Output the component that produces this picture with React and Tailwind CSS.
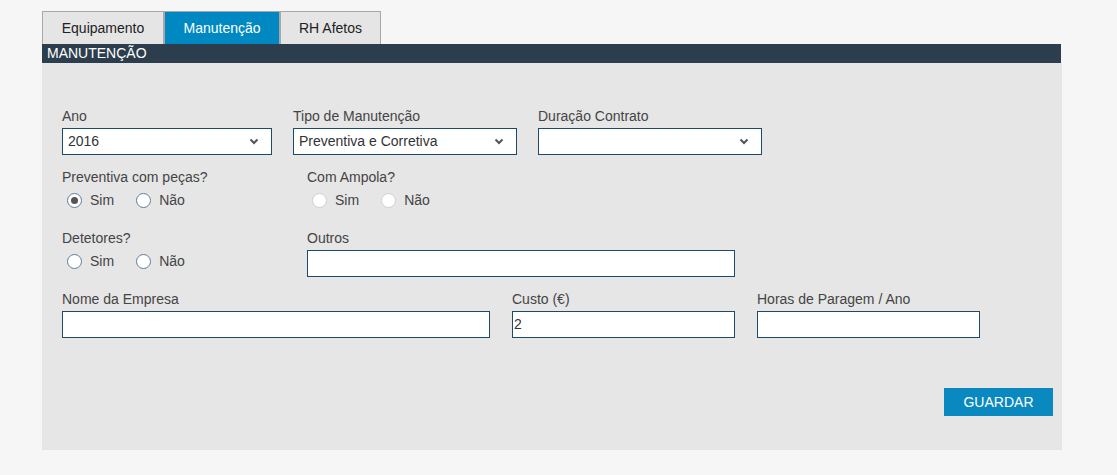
import React, { useState } from "react";

const font = { fontFamily: '"Liberation Sans", Arial, sans-serif' };

// Small chevron for the selects
const Chevron = () => (
  <svg width="10" height="7" viewBox="0 0 10 7" className="shrink-0">
    <polyline points="1.5,1.5 5,5 8.5,1.5" fill="none" stroke="#555" strokeWidth="2" />
  </svg>
);

const SelectBox = ({ label, value, width }) => (
  <div className={width}>
    <div className="text-[14px] leading-4 text-[#444] mb-1">{label}</div>
    <div className="h-[27px] bg-white border border-[#1d4a6b] flex items-center justify-between pl-[5px] pr-[12px] text-[14px] text-[#333]">
      <span>{value}</span>
      <Chevron />
    </div>
  </div>
);

const TextBox = ({ label, value, width }) => (
  <div className={width}>
    <div className="text-[14px] leading-4 text-[#444] mb-1">{label}</div>
    <div className="h-[27px] bg-white border border-[#1d4a6b] flex items-center pl-px text-[14px] text-[#333]">
      {value}
    </div>
  </div>
);

const Radio = ({ checked, muted, label, onClick }) => (
  <button onClick={onClick} className="flex items-center gap-2 text-[14px] leading-4 text-[#444]">
    <span
      className={`w-[15px] h-[15px] rounded-full bg-white border flex items-center justify-center ${
        muted ? "border-[#cfcfcf]" : "border-[#5f7d9c]"
      }`}
    >
      {checked && <span className="w-[7px] h-[7px] rounded-full bg-[#555]" />}
    </span>
    {label}
  </button>
);

const RadioGroup = ({ label, value, setValue, muted, width, gap }) => (
  <div className={width}>
    <div className="text-[14px] leading-4 text-[#444]">{label}</div>
    <div className={`flex gap-[22px] pl-[5px] ${gap}`}>
      <Radio label="Sim" muted={muted} checked={value === "sim"} onClick={() => setValue("sim")} />
      <Radio label="Não" muted={muted} checked={value === "nao"} onClick={() => setValue("nao")} />
    </div>
  </div>
);

export default function App() {
  const [tab, setTab] = useState("Manutenção");
  const [pecas, setPecas] = useState("sim");
  const [ampola, setAmpola] = useState(null);
  const [detetores, setDetetores] = useState(null);

  const tabs = [
    { name: "Equipamento", w: "w-[122px]" },
    { name: "Manutenção", w: "w-[116px]" },
    { name: "RH Afetos", w: "w-[101px]" },
  ];

  return (
    <div className="min-h-screen bg-[#f6f6f6] pt-[11px] pl-[42px]" style={font}>
      {/* Tabs */}
      <div className="flex">
        {tabs.map((t) => (
          <button
            key={t.name}
            onClick={() => setTab(t.name)}
            className={`h-[33px] ${t.w} border border-b-0 border-[#a8a8a8] text-[14px] ${
              tab === t.name ? "bg-[#0088c2] text-white border-[#0088c2]" : "bg-[#e5e5e5] text-[#222]"
            }`}
          >
            {t.name}
          </button>
        ))}
      </div>

      {/* Section header */}
      <div className="w-[1019px] h-[19px] bg-[#2c3e4d] text-white text-[14px] leading-[19px] pl-[5px]">
        MANUTENÇÃO
      </div>

      {/* Form panel */}
      <div className="w-[1020px] bg-[#e6e6e6] pt-[45px] pl-[20px] pr-[9px] pb-[34px]">
        <div className="flex gap-[21px]">
          <SelectBox label="Ano" value="2016" width="w-[210px]" />
          <SelectBox label="Tipo de Manutenção" value="Preventiva e Corretiva" width="w-[224px]" />
          <SelectBox label="Duração Contrato" value="" width="w-[224px]" />
        </div>

        <div className="flex mt-[14px]">
          <RadioGroup label="Preventiva com peças?" value={pecas} setValue={setPecas} width="w-[245px]" gap="mt-[7px]" />
          <RadioGroup label="Com Ampola?" value={ampola} setValue={setAmpola} muted width="w-[245px]" gap="mt-[7px]" />
        </div>

        <div className="flex mt-[22px]">
          <RadioGroup label="Detetores?" value={detetores} setValue={setDetetores} width="w-[245px]" gap="mt-[7px]" />
          <TextBox label="Outros" value="" width="w-[428px]" />
        </div>

        <div className="flex gap-[22px] mt-[14px]">
          <TextBox label="Nome da Empresa" value="" width="w-[428px]" />
          <TextBox label="Custo (€)" value="2" width="w-[223px]" />
          <TextBox label="Horas de Paragem / Ano" value="" width="w-[223px]" />
        </div>

        <div className="flex justify-end mt-[50px]">
          <button className="w-[109px] h-[28px] bg-[#0a88c0] text-white text-[14px]">GUARDAR</button>
        </div>
      </div>
    </div>
  );
}
